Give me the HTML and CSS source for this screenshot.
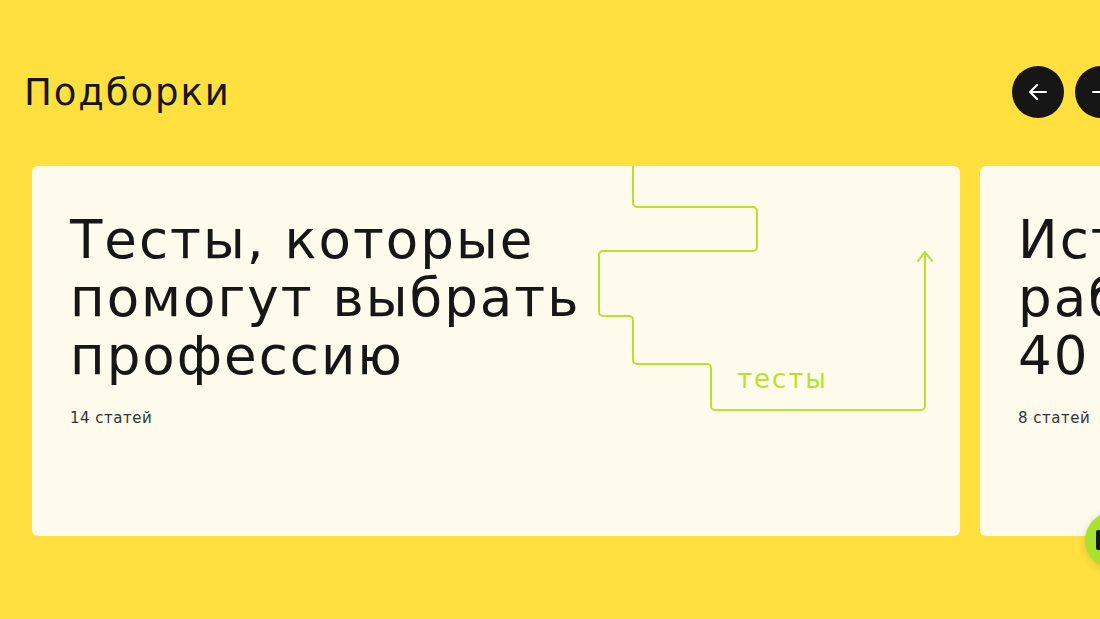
FILE: index.html
```html
<!DOCTYPE html>
<html lang="ru">
<head>
<meta charset="utf-8">
<link rel="stylesheet" href="styles.css">
</head>
<body>
<section class="collections">
  <header class="head">
    <h2 class="head-title">Подборки</h2>
    <div class="nav">
      <button class="nav-btn" aria-label="Назад">
        <svg width="24" height="24" viewBox="0 0 24 24"><path d="M20 12H4M11 5l-7 7 7 7" fill="none" stroke="#fff" stroke-width="2" stroke-linecap="round" stroke-linejoin="round"/></svg>
      </button>
      <button class="nav-btn" aria-label="Вперёд">
        <svg width="24" height="24" viewBox="0 0 24 24"><path d="M4 12h16M13 5l7 7-7 7" fill="none" stroke="#fff" stroke-width="2" stroke-linecap="round" stroke-linejoin="round"/></svg>
      </button>
    </div>
  </header>
  <div class="track">
    <article class="card">
      <h3 class="card-title">Тесты, которые помогут выбрать профессию</h3>
      <p class="card-count">14 статей</p>
      <svg class="card-art" width="360" height="260" viewBox="0 0 360 260">
        <path d="M35 0V37a4 4 0 0 0 4 4H155a4 4 0 0 1 4 4V81a4 4 0 0 1-4 4H5a4 4 0 0 0-4 4V146a4 4 0 0 0 4 4H31a4 4 0 0 1 4 4V194a4 4 0 0 0 4 4H109a4 4 0 0 1 4 4V240a4 4 0 0 0 4 4H323a4 4 0 0 0 4-4V86M320 95l7-9 7 9" fill="none" stroke="#b7e22c" stroke-width="2" stroke-linecap="round" stroke-linejoin="round"/>
        <text x="139" y="222" class="art-label">тесты</text>
      </svg>
    </article>
    <article class="card">
      <h3 class="card-title">Истории<br>работы после<br>40 лет</h3>
      <p class="card-count">8 статей</p>
    </article>
  </div>
  <button class="fab" aria-label="Чат"><span class="fab-icon"></span></button>
</section>
</body>
</html>
```
FILE: styles.css
```css
* { box-sizing: border-box; }
html, body { margin: 0; padding: 0; }
body {
  width: 1100px;
  height: 619px;
  overflow: hidden;
  background: #ffe03f;
  font-family: "DejaVu Sans", "Liberation Sans", sans-serif;
  color: #161616;
}
.collections {
  position: relative;
  height: 619px;
  padding-top: 64px;
}
.head {
  display: flex;
  align-items: center;
  justify-content: space-between;
  padding-left: 24px;
  height: 56px;
}
.head-title {
  margin: 0;
  font-size: 37px;
  font-weight: 400;
  letter-spacing: 1.9px;
}
.nav {
  display: flex;
  gap: 11px;
  margin-right: -27px;
}
.nav-btn {
  width: 52px;
  height: 52px;
  border-radius: 50%;
  border: 0;
  background: #161616;
  display: flex;
  align-items: center;
  justify-content: center;
  padding: 0;
}
.track {
  display: flex;
  gap: 20px;
  margin-top: 46px;
  padding-left: 32px;
}
.card {
  position: relative;
  flex: 0 0 928px;
  height: 370px;
  background: #fefbec;
  border-radius: 6px;
  padding: 45px 38px 0;
  overflow: hidden;
}
.card-title {
  margin: 0;
  width: 540px;
  font-size: 53px;
  font-weight: 400;
  line-height: 58px;
  letter-spacing: 2px;
}
.card-count {
  margin: 24px 0 0;
  font-size: 15px;
  letter-spacing: 0.5px;
  color: #333;
}
.card-art {
  position: absolute;
  left: 566px;
  top: 0;
}
.art-label {
  font-family: "DejaVu Sans", sans-serif;
  font-size: 26px;
  letter-spacing: 1.9px;
  fill: #b7e22c;
}
.fab {
  position: absolute;
  left: 1085px;
  top: 512px;
  width: 56px;
  height: 56px;
  border-radius: 50%;
  border: 0;
  background: #a6e22e;
  box-shadow: 0 2px 8px rgba(0,0,0,0.15);
  padding: 0;
}
.fab-icon {
  position: absolute;
  left: 11px;
  top: 18px;
  width: 14px;
  height: 20px;
  background: #161616;
  border-radius: 2px;
}
```
